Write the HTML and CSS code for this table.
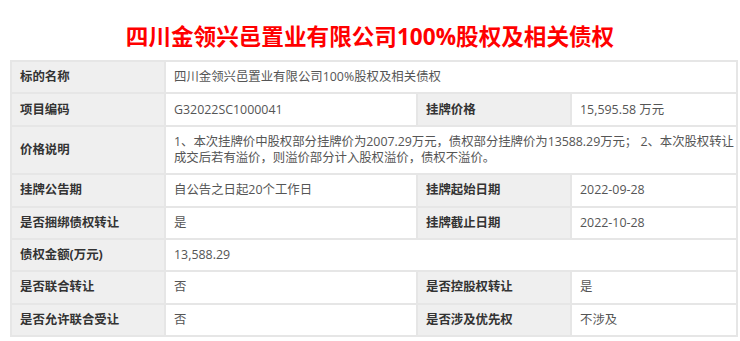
FILE: index.html
```html
<!DOCTYPE html>
<html lang="zh">
<head>
<meta charset="utf-8">
<title>四川金领兴邑置业有限公司100%股权及相关债权</title>
<link rel="stylesheet" href="styles.css">
</head>
<body>
<h1 class="title">四川金领兴邑置业有限公司100%股权及相关债权</h1>
<table class="info">
  <colgroup>
    <col class="c-label"><col class="c-value"><col class="c-label"><col class="c-value2">
  </colgroup>
  <tr><th>标的名称</th><td colspan="3">四川金领兴邑置业有限公司100%股权及相关债权</td></tr>
  <tr><th>项目编码</th><td>G32022SC1000041</td><th>挂牌价格</th><td>15,595.58 万元</td></tr>
  <tr><th>价格说明</th><td colspan="3" class="note">1、本次挂牌价中股权部分挂牌价为2007.29万元，债权部分挂牌价为13588.29万元； 2、本次股权转让成交后若有溢价，则溢价部分计入股权溢价，债权不溢价。</td></tr>
  <tr><th>挂牌公告期</th><td>自公告之日起20个工作日</td><th>挂牌起始日期</th><td>2022-09-28</td></tr>
  <tr><th>是否捆绑债权转让</th><td>是</td><th>挂牌截止日期</th><td>2022-10-28</td></tr>
  <tr><th>债权金额(万元)</th><td colspan="3">13,588.29</td></tr>
  <tr><th>是否联合转让</th><td>否</td><th>是否控股权转让</th><td>是</td></tr>
  <tr><th>是否允许联合受让</th><td>否</td><th>是否涉及优先权</th><td>不涉及</td></tr>
</table>
</body>
</html>
```
FILE: styles.css
```css
html, body {
  margin: 0;
  padding: 0;
  background: #fff;
}
body {
  font-family: "Open Sans", "Noto Sans CJK SC", sans-serif;
  color: #555;
}
.title {
  margin: 0;
  padding-top: 21px;
  height: 39px;
  line-height: 32px;
  font-size: 22.6px;
  font-weight: 700;
  color: #f00;
  text-align: center;
  font-family: "Open Sans", "Noto Sans CJK SC", sans-serif;
}
.info {
  margin-left: 10px;
  width: 726px;
  border-collapse: collapse;
  table-layout: fixed;
  font-size: 12.4px;
  line-height: 16px;
}
.c-label { width: 154px; }
.c-value { width: 252px; }
.c-value2 { width: 166px; }
.info th, .info td {
  border: 2px solid #e6e6e6;
  padding: 7.2px 8px;
  text-align: left;
  vertical-align: middle;
}
.info th {
  background: #efefef;
  color: #333;
  font-weight: 700;
}
.info td {
  color: #555;
  background: #fff;
}
.info td.note {
  padding-right: 2px;
  letter-spacing: -0.04px;
}
```
